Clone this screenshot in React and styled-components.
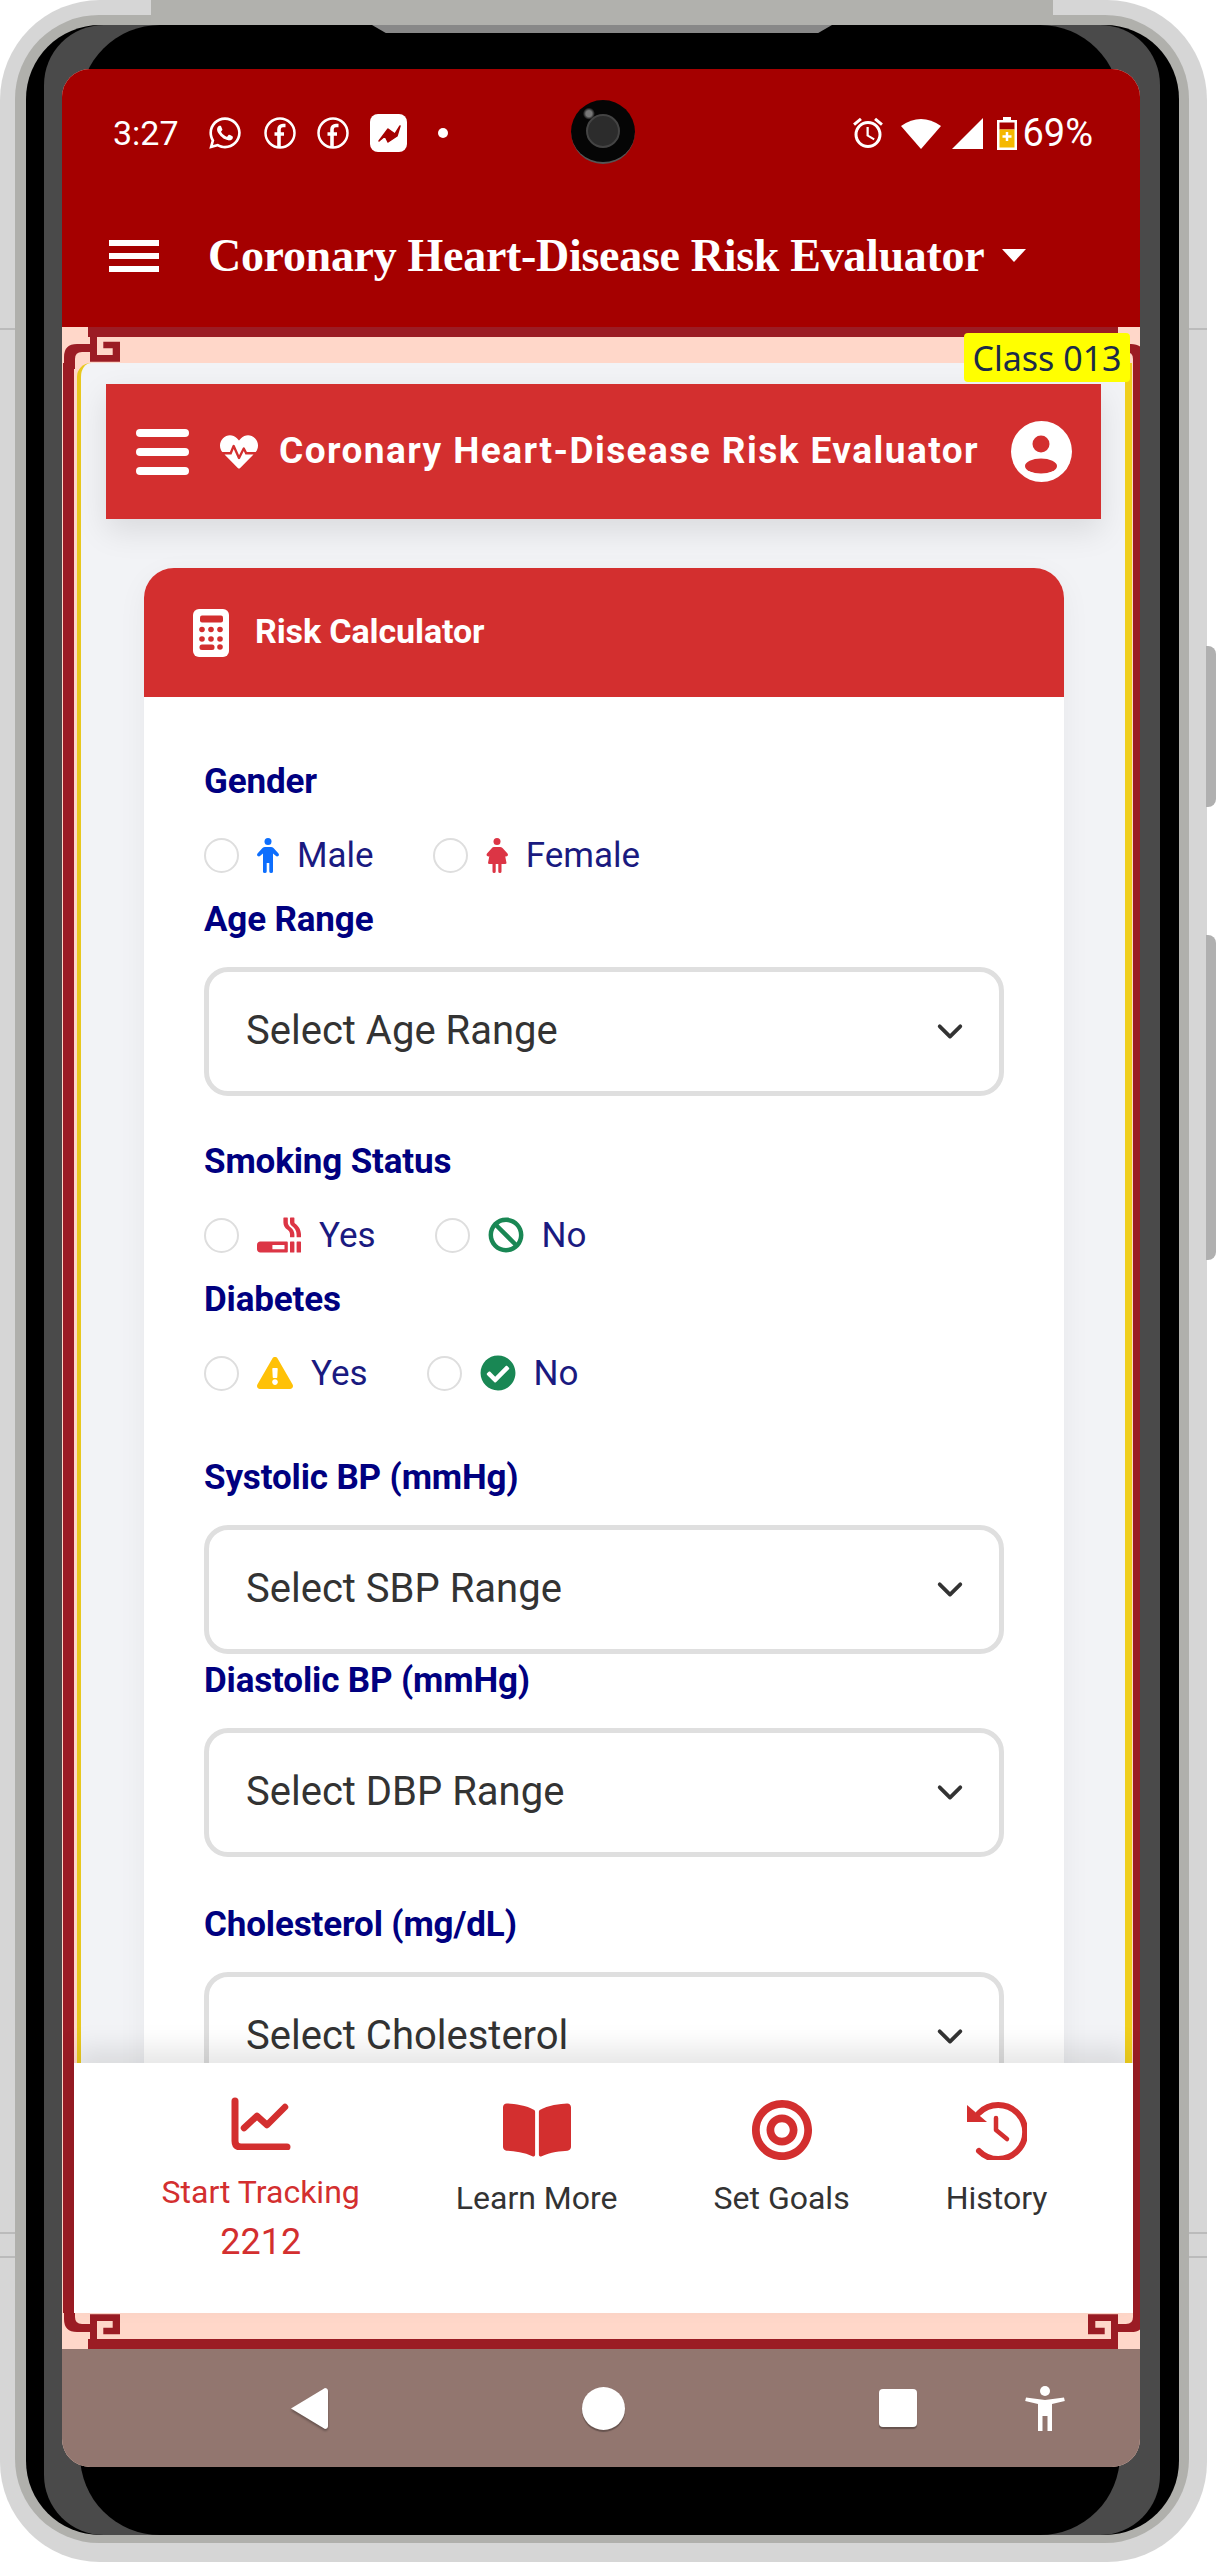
import React from 'react';
import styled, { createGlobalStyle } from 'styled-components';
import { FaWhatsapp, FaHeartbeat, FaSmoking, FaBan, FaExclamationTriangle, FaCheckCircle, FaBookOpen, FaBullseye } from 'react-icons/fa';
import { MdOutlineAlarm } from 'react-icons/md';

const GlobalStyle = createGlobalStyle`
  html, body {
    margin: 0;
    background: #fff;
    font-family: Roboto, "Liberation Sans", sans-serif;
    overflow: hidden;
  }
  * { box-sizing: border-box; }
`;

const Device = styled.div`
  position: relative;
  width: 1216px;
  height: 2562px;
`;

const Shell = styled.div`
  width: 1207px;
  height: 2562px;
  padding: 15px 18px 19px 15px;
  border-radius: 100px;
  background-color: #d6d6d6;
  background-image:
    linear-gradient(#bbb, #bbb),
    linear-gradient(#bbb, #bbb),
    linear-gradient(#bbb, #bbb);
  background-repeat: repeat-x;
  background-size: 100% 2px;
  background-position: 0 328px, 0 2232px, 0 2256px;
`;

const Bezel = styled.div`
  height: 100%;
  padding: 10px 10px 8px 11px;
  border-radius: 84px;
  background: #b0b0ac;
`;

const BlackRing = styled.div`
  height: 100%;
  padding: 0 19px 0 18px;
  border-radius: 74px;
  background: #000;
`;

const DarkBand = styled.div`
  position: relative;
  height: 100%;
  padding: 44px 20px 68px 18px;
  border-radius: 60px;
  background: #4a4a4a;

  &::before {
    content: "";
    position: absolute;
    top: 0;
    bottom: 0;
    left: 36px;
    right: 40px;
    background: #000;
    border-radius: 80px;
  }
`;

const TopBar = styled.div`
  position: absolute;
  top: 0;
  left: 151px;
  width: 902px;
  height: 25px;
  background: #b1b1ad;
`;

const Notch = styled.div`
  position: absolute;
  top: 25px;
  left: 372px;
  width: 460px;
  height: 8px;
  background: #888;
  clip-path: polygon(0 0, 100% 0, 97% 100%, 3% 100%);
`;

const SideButton = styled.div`
  position: absolute;
  right: 0;
  top: ${p => p.$top}px;
  width: 10px;
  height: ${p => p.$height}px;
  background: #b0b0b0;
  border-radius: 0 8px 8px 0;
`;

const Screen = styled.div`
  position: relative;
  height: 100%;
  display: flex;
  flex-direction: column;
  overflow: hidden;
  border-radius: 28px;
  background: #ffd7c9;
`;

const AppHeader = styled.header`
  height: 258px;
  flex: none;
  padding: 40px 47px 0 51px;
  background: #a50000;
  color: #fff;
`;

const StatusRow = styled.div`
  display: flex;
  align-items: center;
  height: 48px;
`;

const StatusTime = styled.span`
  font-size: 34px;
  width: 94px;
`;

const StatusIcons = styled.div`
  display: flex;
  align-items: center;
  gap: 21px;
`;

const StatusRight = styled.div`
  margin-left: auto;
  display: flex;
  align-items: center;
  font-size: 38px;
`;

const GlyphSlot = styled.span`
  display: inline-flex;
  margin-left: ${p => p.$gap}px;
`;

const Dot = styled.span`
  width: 10px;
  height: 10px;
  margin-left: 10px;
  border-radius: 50%;
  background: #fff;
`;

const Camera = styled.div`
  position: absolute;
  left: 509px;
  top: 31px;
  width: 64px;
  height: 64px;
  border-radius: 50%;
  background: radial-gradient(circle at 28% 22%, #777 0 3px, #050505 6px);
  border-bottom: 2px solid #555;
  display: flex;
  align-items: center;
  justify-content: center;

  &::after {
    content: "";
    width: 30px;
    height: 30px;
    border-radius: 50%;
    background: #2c2c2c;
    border: 2px solid #444;
  }
`;

const TitleRow = styled.div`
  display: flex;
  align-items: center;
  margin: 72px 0 0 -4px;
`;

const MenuBars = styled.div`
  display: flex;
  flex-direction: column;
  justify-content: space-between;
  width: ${p => p.$w}px;
  height: ${p => p.$h}px;

  span {
    display: block;
    height: ${p => p.$t}px;
    background: #fff;
    border-radius: ${p => p.$r}px;
  }
`;

const AppTitle = styled.h1`
  margin: 0 0 0 49px;
  font-family: "Liberation Serif", serif;
  font-size: 46px;
  font-weight: 700;
  letter-spacing: -0.3px;
  white-space: nowrap;
`;

const Caret = styled.span`
  margin-left: 18px;
  width: 0;
  height: 0;
  border-left: 12px solid transparent;
  border-right: 12px solid transparent;
  border-top: 13px solid #fff;
`;

const WebArea = styled.main`
  position: relative;
  flex: 1;
  min-height: 0;
  padding: 36px 0;
  overflow: hidden;
  background: #ffd7c9;
`;

const EdgeLine = styled.div`
  position: absolute;
  left: 26px;
  width: 1030px;
  height: 10px;
  background: #9b1c24;
  ${p => (p.$bottom ? 'bottom: 0;' : 'top: 0;')}
`;

const CornerSvg = styled.svg`
  position: absolute;
  width: 60px;
  height: 42px;
  ${p => (p.$bottom ? 'bottom: 0;' : 'top: 0;')}
  ${p => (p.$right ? 'right: -6px;' : 'left: 0;')}
  transform: scale(${p => (p.$right ? -1 : 1)}, ${p => (p.$bottom ? -1 : 1)});
`;

const Rail = styled.div`
  height: 100%;
  display: flex;
  flex-direction: column;
  margin-left: 1px;
  border-left: 11px solid #9b1c24;
  border-right: 7px solid #9b1c24;
`;

const Sheet = styled.div`
  flex: 1;
  min-height: 0;
  margin: 0 1px 0 3px;
  padding-top: 21px;
  overflow: hidden;
  border-left: 4px solid #e8c81e;
  border-right: 7px solid #f0cf1d;
  border-top-left-radius: 14px;
  background: #f2f3f6;
`;

const ClassBadge = styled.div`
  position: absolute;
  top: 6px;
  right: 10px;
  width: 166px;
  height: 49px;
  display: flex;
  align-items: center;
  justify-content: center;
  z-index: 3;
  border-radius: 4px;
  background: #ffff00;
  color: #1b2b48;
  font-family: "Noto Sans", sans-serif;
  font-size: 34px;
`;

const WebBar = styled.div`
  height: 135px;
  margin: 0 24px 0 25px;
  padding: 0 29px 0 30px;
  display: flex;
  align-items: center;
  background: #d32f2f;
  color: #fff;
  box-shadow: 0 12px 30px rgba(0, 0, 0, 0.1);
`;

const WebTitle = styled.div`
  margin: -2px 0 0 21px;
  font-size: 37px;
  font-weight: 700;
  letter-spacing: 1.45px;
  white-space: nowrap;
`;

const Card = styled.section`
  margin: 49px 61px 0 63px;
  border-radius: 30px 30px 0 0;
  background: #fff;
  box-shadow: 0 8px 30px rgba(0, 0, 0, 0.05);
`;

const CardHeader = styled.div`
  height: 129px;
  padding-left: 49px;
  display: flex;
  align-items: center;
  gap: 26px;
  background: #d32f2f;
  border-radius: 30px 30px 0 0;
  color: #fff;
  font-size: 34px;
  font-weight: 700;
`;

const CardTitle = styled.span`
  margin-top: -4px;
  letter-spacing: -0.1px;
`;

const CardBody = styled.div`
  padding: 60px 60px 0 60px;
`;

const Field = styled.div`
  margin-bottom: ${p => p.$after}px;
`;

const FieldLabel = styled.div`
  height: 48px;
  margin-bottom: 24px;
  color: #000080;
  font-size: 35px;
  font-weight: 700;
  line-height: 50px;
  letter-spacing: -0.15px;
`;

const RadioRow = styled.div`
  display: flex;
  align-items: center;
  gap: 59px;
  height: 52px;
`;

const RadioOption = styled.label`
  display: flex;
  align-items: center;
  gap: 18px;
  color: #1a1a80;
  font-size: 35px;
`;

const RadioCircle = styled.span`
  width: 35px;
  height: 35px;
  border: 2px solid #dedede;
  border-radius: 50%;
  background: #fff;
`;

const IconTint = styled.span`
  display: inline-flex;
  color: ${p => p.$color};
`;

const SelectBox = styled.div`
  height: 129px;
  padding: 0 34px 2px 37px;
  display: flex;
  align-items: center;
  justify-content: space-between;
  border: 5px solid #dfdfdf;
  border-radius: 24px;
  background: #fff;
  color: #333;
  font-size: 40px;
`;

const BottomNav = styled.nav`
  position: relative;
  flex: none;
  height: 250px;
  display: flex;
  justify-content: center;
  align-items: flex-start;
  gap: 96px;
  padding-left: 2px;
  background: #fff;
  box-shadow: 0 -14px 26px rgba(0, 0, 0, 0.1);
`;

const NavItem = styled.div`
  display: flex;
  flex-direction: column;
  align-items: center;
  padding-top: ${p => (p.$active ? 34 : 37)}px;
  color: ${p => (p.$active ? '#d32f2f' : '#333')};
  font-size: 32px;
  font-weight: 450;
  line-height: 36px;
  white-space: nowrap;
`;

const NavIcon = styled.div`
  height: ${p => (p.$active ? 53 : 60)}px;
  margin-bottom: ${p => (p.$active ? 24 : 20)}px;
  display: flex;
  align-items: center;
  color: #d32f2f;
`;

const NavCount = styled.div`
  margin-top: 14px;
  font-size: 36px;
  font-weight: 450;
`;

const SystemNav = styled.div`
  height: 118px;
  flex: none;
  padding-left: 227px;
  display: flex;
  align-items: center;
  background: #92766f;
`;

const SysBack = styled.svg`
  width: 39px;
  height: 43px;
  margin-right: 254px;
  filter: drop-shadow(0 2px 1px rgba(0, 0, 0, 0.3));
`;

const SysHome = styled.span`
  width: 43px;
  height: 43px;
  margin-right: 254px;
  border-radius: 50%;
  background: #fff;
  box-shadow: 0 2px 1px rgba(0, 0, 0, 0.3);
`;

const SysRecent = styled.span`
  width: 38px;
  height: 38px;
  margin-right: 108px;
  border-radius: 4px;
  background: #fff;
  box-shadow: 0 2px 1px rgba(0, 0, 0, 0.3);
`;

const Chevron = () => (
  <svg width="30" height="30" viewBox="0 0 16 16" fill="none" stroke="#333" strokeWidth="2" strokeLinecap="round" strokeLinejoin="round">
    <path d="M2.5 5.5 8 11l5.5-5.5" />
  </svg>
);

const FacebookRing = () => (
  <svg width="32" height="32" viewBox="0 0 32 32" fill="none" stroke="#fff">
    <circle cx="16" cy="16" r="14.5" strokeWidth="2.500" />
    <path d="M21.500 8.500h-2.500c-2.500 0-4 1.500-4 3.800V30M10.500 17H20" strokeWidth="3.600" />
  </svg>
);

const MessengerTile = () => (
  <svg width="37" height="38" viewBox="0 0 37 38">
    <rect width="37" height="38" rx="8" fill="#fff" />
    <path d="M9 27 18 15l7 5 5-8-3 10-9 6-3-6z" fill="#a50000" stroke="#a50000" strokeWidth="1.500" strokeLinejoin="round" />
  </svg>
);

const WifiGlyph = () => (
  <svg width="40" height="31" viewBox="0 0 40 31">
    <path d="M20 31 0 8Q20-6 40 8z" fill="#fff" />
  </svg>
);

const SignalGlyph = () => (
  <svg width="31" height="31" viewBox="0 0 31 31">
    <path d="M31 0v31H0z" fill="#fff" />
  </svg>
);

const BatteryGlyph = () => (
  <svg width="20" height="33" viewBox="0 0 20 33">
    <path d="M6 0h8v3h6v30H0V3h6z" fill="#fff" />
    <rect x="2.500" y="5.500" width="15" height="7" fill="#a50000" />
    <rect x="2.500" y="12.500" width="15" height="18" fill="#f5b800" />
    <path d="M10 15v9M5.500 19.500h9" stroke="#fff" strokeWidth="2.500" />
  </svg>
);

const MaleGlyph = () => (
  <svg width="22" height="35" viewBox="0 0 22 35" fill="#0d6efd">
    <circle cx="11" cy="3.500" r="3.500" />
    <path d="M8 9h6q1.500 0 2.500 1l5 5.500q1 1.500-.2 2.500-1.300 1-2.600-.2L16 15.500V33.500q0 1.500-1.800 1.500t-1.900-1.500V25h-2.600v8.500q0 1.500-1.900 1.500T6 33.500V15.500l-2.700 2.300q-1.300 1.200-2.600.2-1.200-1 -.2-2.500l5-5.500Q6.500 9 8 9z" />
  </svg>
);

const FemaleGlyph = () => (
  <svg width="22" height="35" viewBox="0 0 22 35" fill="#dc3545">
    <circle cx="11" cy="3.500" r="3.500" />
    <path d="M8 9h6q1.500 0 2.500 1l5 5.500q1 1.500-.2 2.500-1 .8-2.100.3l1.300 6.700q0 1-1.500 1H15.500V33.500q0 1.500-1.600 1.500t-1.600-1.500V26h-2.600v7.500q0 1.500-1.600 1.500t-1.600-1.500V26H3.500q-1.500 0-1.500-1l1.300-6.700q-1.100.5-2.100-.3-1.200-1-.2-2.500l5-5.500Q6.500 9 8 9z" />
  </svg>
);

const CalculatorGlyph = () => (
  <svg width="36" height="48" viewBox="0 0 36 48">
    <rect width="36" height="48" rx="6" fill="#fff" />
    <rect x="7" y="6.500" width="23" height="7" rx="2" fill="#d32f2f" />
    <g fill="#d32f2f">
      <circle cx="9" cy="20.500" r="2.800" />
      <circle cx="18" cy="20.500" r="2.800" />
      <circle cx="27" cy="20.500" r="2.800" />
      <circle cx="9" cy="30" r="2.800" />
      <circle cx="18" cy="30" r="2.800" />
      <circle cx="27" cy="30" r="2.800" />
      <rect x="6.500" y="35.500" width="15" height="5.500" rx="2.500" />
      <circle cx="27" cy="38" r="2.800" />
    </g>
  </svg>
);

const ChartGlyph = () => (
  <svg width="60" height="53" viewBox="0 0 60 53" fill="none" stroke="#d32f2f" strokeLinecap="round" strokeLinejoin="round">
    <path d="M4 4v40q0 6 6 6h46" strokeWidth="7" />
    <path d="M13 31 26 19l10 9L54 10" strokeWidth="6.500" />
  </svg>
);

const HistoryGlyph = () => (
  <svg width="61" height="60" viewBox="0 0 61 60" fill="none" stroke="#d32f2f" strokeLinecap="round" strokeLinejoin="round">
    <path d="M13 13A27 27 0 1 1 13 51" strokeWidth="6" />
    <path d="M1 5v17h20z" fill="#d32f2f" stroke="none" />
    <path d="M30 18v12l11 9" strokeWidth="4.500" />
  </svg>
);

const UserBadge = () => (
  <svg width="61" height="61" viewBox="0 0 61 61" style={{ marginLeft: 'auto' }}>
    <circle cx="30.500" cy="30.500" r="30.500" fill="#fff" />
    <circle cx="30" cy="23" r="8.500" fill="#d32f2f" />
    <ellipse cx="30" cy="45" rx="16" ry="7.500" fill="#d32f2f" />
  </svg>
);

const Corner = ({ bottom, right }) => (
  <CornerSvg $bottom={bottom} $right={right} viewBox="0 0 60 42">
    <path d="M2 42V30Q2 17 15 17H28V25H20Q13 25 13 32V42Z" fill="#9b1c24" />
    <path d="M28 0H36V8H35V28H50.700V21.300H41.300V14.700H58V34.700H28Z" fill="#9b1c24" />
  </CornerSvg>
);

const RiskField = ({ label, after, children }) => (
  <Field $after={after}>
    <FieldLabel>{label}</FieldLabel>
    {children}
  </Field>
);

const RadioChoice = ({ icon, text }) => (
  <RadioOption>
    <RadioCircle />
    {icon}
    {text}
  </RadioOption>
);

const RangeSelect = ({ text }) => (
  <SelectBox>
    {text}
    <Chevron />
  </SelectBox>
);

export default function App() {
  return (
    <Device>
      <GlobalStyle />
      <Shell>
        <Bezel>
          <BlackRing>
            <DarkBand>
              <Screen>
                <AppHeader>
                  <StatusRow>
                    <StatusTime>3:27</StatusTime>
                    <StatusIcons>
                      <FaWhatsapp size={36} />
                      <FacebookRing />
                      <FacebookRing />
                      <MessengerTile />
                      <Dot />
                    </StatusIcons>
                    <StatusRight>
                      <MdOutlineAlarm size={36} />
                      <GlyphSlot $gap={15}><WifiGlyph /></GlyphSlot>
                      <GlyphSlot $gap={11}><SignalGlyph /></GlyphSlot>
                      <GlyphSlot $gap={14}><BatteryGlyph /></GlyphSlot>
                      <GlyphSlot $gap={5}>69%</GlyphSlot>
                    </StatusRight>
                  </StatusRow>
                  <Camera />
                  <TitleRow>
                    <MenuBars $w={50} $h={32} $t={6} $r={0}>
                      <span />
                      <span />
                      <span />
                    </MenuBars>
                    <AppTitle>Coronary Heart-Disease Risk Evaluator</AppTitle>
                    <Caret />
                  </TitleRow>
                </AppHeader>
                <WebArea>
                  <EdgeLine />
                  <EdgeLine $bottom />
                  <Corner />
                  <Corner right />
                  <Corner bottom />
                  <Corner bottom right />
                  <ClassBadge>Class 013</ClassBadge>
                  <Rail>
                    <Sheet>
                      <WebBar>
                        <MenuBars $w={53} $h={46} $t={8} $r={4}>
                          <span />
                          <span />
                          <span />
                        </MenuBars>
                        <FaHeartbeat size={38} style={{ marginLeft: 31 }} />
                        <WebTitle>Coronary Heart-Disease Risk Evaluator</WebTitle>
                        <UserBadge />
                      </WebBar>
                      <Card>
                        <CardHeader>
                          <CalculatorGlyph />
                          <CardTitle>Risk Calculator</CardTitle>
                        </CardHeader>
                        <CardBody>
                          <RiskField label="Gender" after={14}>
                            <RadioRow>
                              <RadioChoice icon={<MaleGlyph />} text="Male" />
                              <RadioChoice icon={<FemaleGlyph />} text="Female" />
                            </RadioRow>
                          </RiskField>
                          <RiskField label="Age Range" after={41}>
                            <RangeSelect text="Select Age Range" />
                          </RiskField>
                          <RiskField label="Smoking Status" after={14}>
                            <RadioRow>
                              <RadioChoice icon={<IconTint $color="#dc3545"><FaSmoking size={44} /></IconTint>} text="Yes" />
                              <RadioChoice icon={<IconTint $color="#198754"><FaBan size={36} /></IconTint>} text="No" />
                            </RadioRow>
                          </RiskField>
                          <RiskField label="Diabetes" after={54}>
                            <RadioRow>
                              <RadioChoice icon={<IconTint $color="#ffc107"><FaExclamationTriangle size={36} /></IconTint>} text="Yes" />
                              <RadioChoice icon={<IconTint $color="#198754"><FaCheckCircle size={36} /></IconTint>} text="No" />
                            </RadioRow>
                          </RiskField>
                          <RiskField label="Systolic BP (mmHg)" after={2}>
                            <RangeSelect text="Select SBP Range" />
                          </RiskField>
                          <RiskField label="Diastolic BP (mmHg)" after={43}>
                            <RangeSelect text="Select DBP Range" />
                          </RiskField>
                          <RiskField label="Cholesterol (mg/dL)" after={0}>
                            <RangeSelect text="Select Cholesterol" />
                          </RiskField>
                        </CardBody>
                      </Card>
                    </Sheet>
                    <BottomNav>
                      <NavItem $active>
                        <NavIcon $active><ChartGlyph /></NavIcon>
                        Start Tracking
                        <NavCount>2212</NavCount>
                      </NavItem>
                      <NavItem>
                        <NavIcon><FaBookOpen size={68} /></NavIcon>
                        Learn More
                      </NavItem>
                      <NavItem>
                        <NavIcon><FaBullseye size={62} /></NavIcon>
                        Set Goals
                      </NavItem>
                      <NavItem>
                        <NavIcon><HistoryGlyph /></NavIcon>
                        History
                      </NavItem>
                    </BottomNav>
                  </Rail>
                </WebArea>
                <SystemNav>
                  <SysBack viewBox="0 0 39 43">
                    <path d="M36 1 2 21.500 36 42c1.500 0 3-1 3-3V4c0-2-1.500-3-3-3z" fill="#fff" />
                  </SysBack>
                  <SysHome />
                  <SysRecent />
                  <svg width="40" height="45" viewBox="0 0 40 45" fill="#fff">
                    <circle cx="20" cy="5" r="5" />
                    <path d="M1 11.500 20 14l19-2.500.8 3.500L27 18v27h-4.500V30h-5v15H13V18L.2 15z" />
                  </svg>
                </SystemNav>
              </Screen>
            </DarkBand>
          </BlackRing>
        </Bezel>
      </Shell>
      <TopBar />
      <Notch />
      <SideButton $top={646} $height={161} />
      <SideButton $top={935} $height={325} />
    </Device>
  );
}
